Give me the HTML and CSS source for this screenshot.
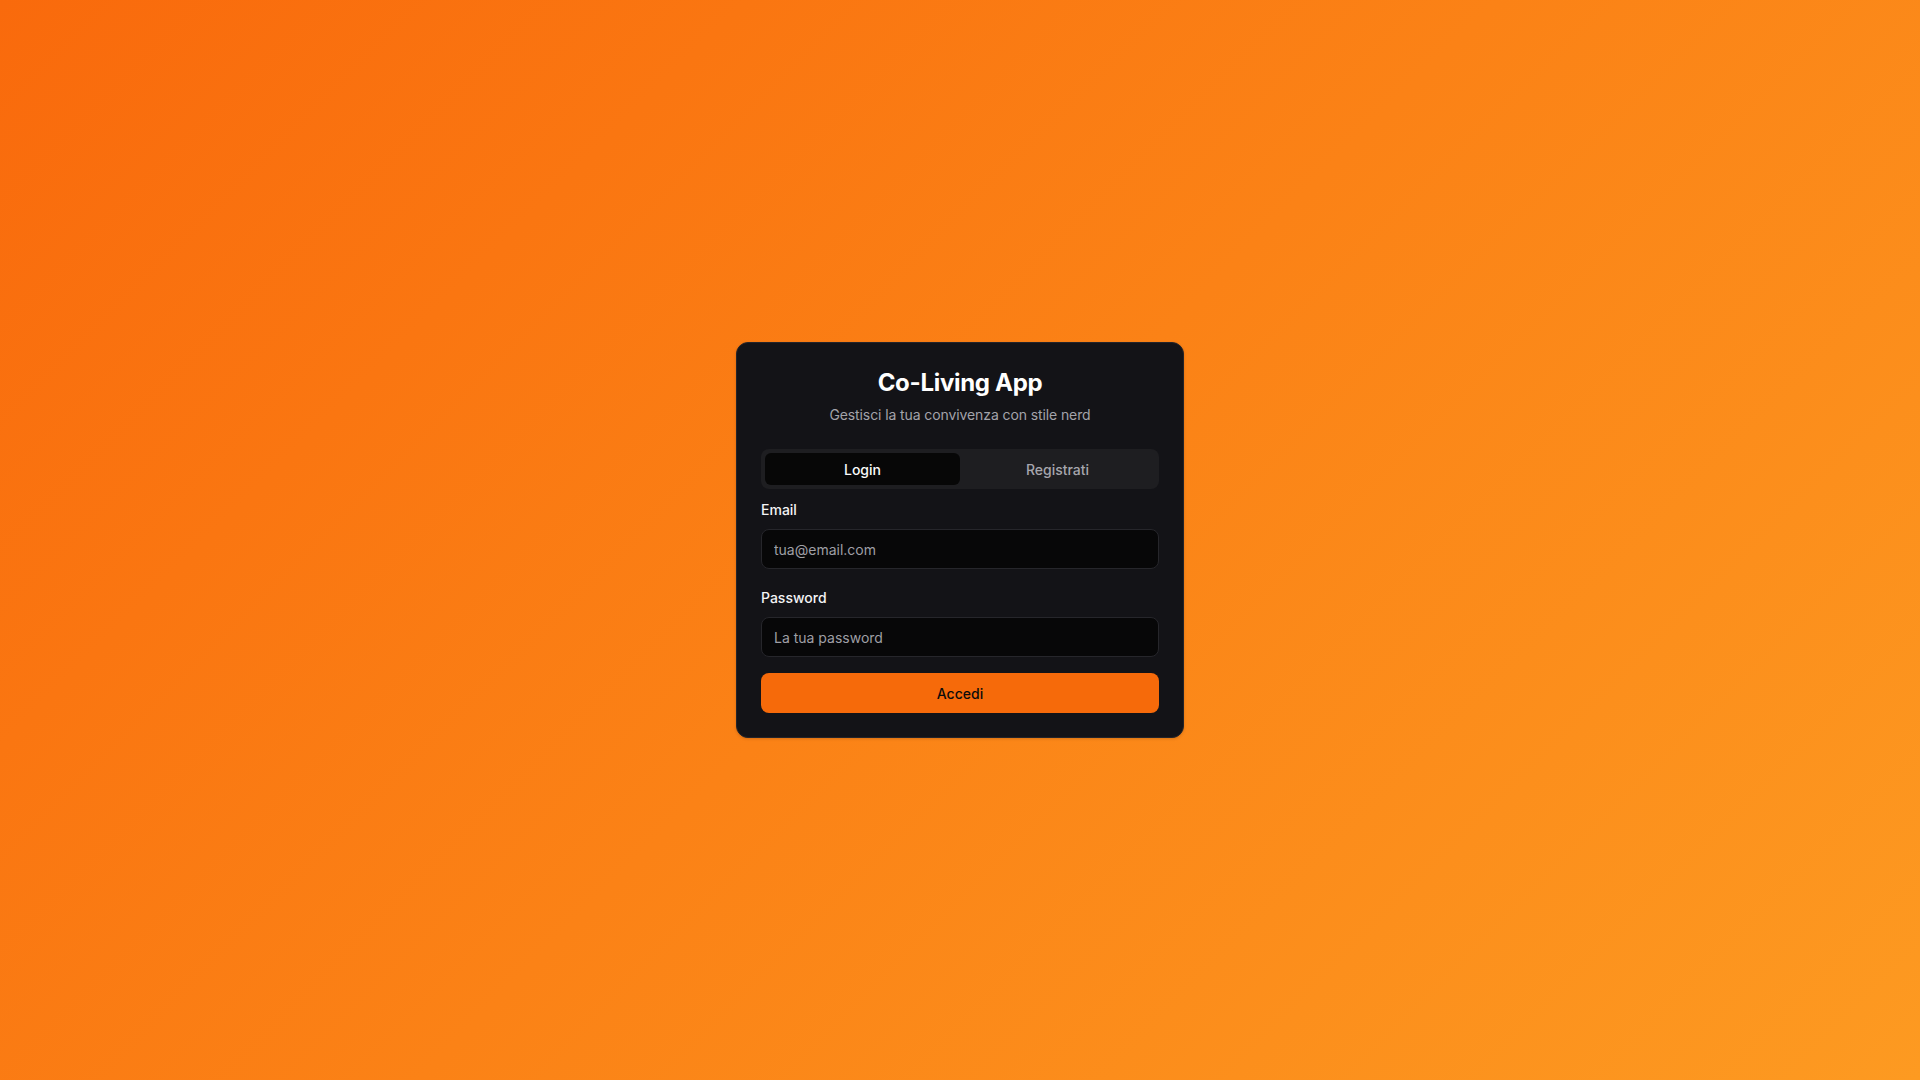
FILE: index.html
```html
<!DOCTYPE html>
<html lang="it">
<head>
<meta charset="utf-8">
<title>Co-Living App</title>
<link rel="stylesheet" href="styles.css">
</head>
<body>
<main class="page">
  <section class="card">
    <header class="card-header">
      <h1 class="title">Co-Living App</h1>
      <p class="subtitle">Gestisci la tua convivenza con stile nerd</p>
    </header>
    <div class="card-content">
      <div class="tabs">
        <button class="tab tab-active" type="button">Login</button>
        <button class="tab" type="button">Registrati</button>
      </div>
      <form class="form">
        <div class="field field-first">
          <label class="label" for="email">Email</label>
          <input class="input" id="email" type="email" placeholder="tua@email.com">
        </div>
        <div class="field">
          <label class="label" for="password">Password</label>
          <input class="input" id="password" type="password" placeholder="La tua password">
        </div>
        <button class="submit" type="button">Accedi</button>
      </form>
    </div>
  </section>
</main>
</body>
</html>
```
FILE: styles.css
```css
* { box-sizing: border-box; }
html, body { margin: 0; padding: 0; height: 100%; }
body {
  font-family: Inter, "Noto Sans", "Liberation Sans", sans-serif;
  background: linear-gradient(135deg, #f96a0c 0%, #fb8216 50%, #fd9a21 100%);
  color: #fafafa;
}
.page {
  min-height: 100vh;
  display: flex;
  align-items: center;
  justify-content: center;
}
.card {
  width: 448px;
  background: #131317;
  border: 1px solid #24242a;
  border-radius: 12px;
  box-shadow: 0 1px 3px rgba(0,0,0,0.15);
}
.card-header {
  padding: 24px 24px 24px;
  display: flex;
  flex-direction: column;
  align-items: center;
  gap: 6px;
}
.title {
  margin: 0;
  font-size: 24px;
  line-height: 32px;
  font-weight: 700;
  color: #ffffff;
  letter-spacing: -0.3px;
}
.subtitle {
  margin: 0;
  font-size: 14px;
  line-height: 20px;
  color: #a3a3aa;
  letter-spacing: -0.1px;
}
.card-content {
  padding: 0 24px 24px;
}
.tabs {
  height: 40px;
  padding: 4px;
  background: #1e1e21;
  border-radius: 8px;
  display: grid;
  grid-template-columns: 1fr 1fr;
}
.tab {
  border: 0;
  background: transparent;
  font-family: inherit;
  font-size: 14px;
  font-weight: 500;
  color: #a6a6ad;
  border-radius: 6px;
  height: 32px;
  cursor: pointer;
}
.tab-active {
  background: #070707;
  color: #fafafa;
}
.form {
  display: flex;
  flex-direction: column;
}
.field {
  display: flex;
  flex-direction: column;
  gap: 9px;
  margin-top: 19px;
}
.field-first { margin-top: 11px; }
.label {
  font-size: 14px;
  line-height: 20px;
  font-weight: 500;
  color: #f4f4f5;
}
.input {
  height: 40px;
  width: 100%;
  padding: 0 12px;
  background: #070708;
  border: 1px solid #26262b;
  border-radius: 8px;
  font-family: inherit;
  font-size: 14px;
  color: #fafafa;
  outline: none;
}
.input::placeholder { color: #9f9fa5; }
.submit {
  margin-top: 16px;
  height: 40px;
  width: 100%;
  border: 0;
  border-radius: 8px;
  background: #f66a0a;
  color: #0c0c0c;
  font-family: inherit;
  font-size: 14px;
  font-weight: 500;
  cursor: pointer;
}
```
